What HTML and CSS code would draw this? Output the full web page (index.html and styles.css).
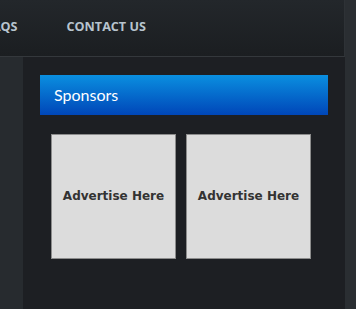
FILE: index.html
```html
<!DOCTYPE html>
<html>
  <head>
    <title>Sponsors</title>
    <link rel="stylesheet" href="styles.css">
  </head>

  <body>
    <div class="wrapper">
      <div class="nav">
        <ul class="menu">
          <li class="menu-item">FAQS</li>
          <li class="menu-item">CONTACT US</li>
        </ul>
      </div>

      <div class="main">
        <div class="sidebar"></div>
        <div class="content">
          <div class="widget-title">Sponsors</div>
          <div class="ads">
            <div class="ad">Advertise Here</div>
            <div class="ad">Advertise Here</div>
          </div>
        </div>
      </div>
    </div>
  </body>
</html>
```

FILE: styles.css
```css
html {
  height: 100%;
}

body {
  margin: 0;
  height: 100%;
  background: #2a2e32;
}

.wrapper {
  width: 345px;
  height: 100%;
  display: flex;
  flex-direction: column;
}

.nav {
  height: 57px;
  flex-shrink: 0;
  display: flex;
  align-items: center;
  padding-bottom: 4px;
  box-sizing: border-box;
  background: linear-gradient(#23272b, #1b1e21);
  border-bottom: 1px solid #34383c;
  border-right: 1px solid #2e3236;
  overflow: hidden;
}

.menu {
  display: flex;
  gap: 49px;
  margin: 0 0 0 -15px;
  padding: 0;
  list-style: none;
}

.menu-item {
  color: #b8c4ce;
  font-family: "Open Sans", sans-serif;
  font-weight: 700;
  font-size: 12.6px;
  white-space: nowrap;
}

.main {
  flex: 1;
  display: flex;
}

.sidebar {
  width: 23px;
  background: #272b2f;
}

.content {
  flex: 1;
  padding: 18px 17px 0 17px;
  background: #1d1f23;
}

.widget-title {
  height: 40px;
  display: flex;
  align-items: center;
  padding-left: 14px;
  padding-bottom: 1px;
  box-sizing: border-box;
  background: linear-gradient(#0a8fe0, #0046b8);
  color: #ffffff;
  font-family: "Lato", sans-serif;
  font-size: 16px;
}

.ads {
  display: flex;
  gap: 10px;
  margin-top: 19px;
  padding-left: 11px;
}

.ad {
  width: 125px;
  height: 125px;
  box-sizing: border-box;
  display: flex;
  align-items: center;
  justify-content: center;
  padding-bottom: 2px;
  background: #dcdcdc;
  border: 1px solid #8c8c8c;
  color: #333333;
  font-family: "DejaVu Sans", sans-serif;
  font-weight: 700;
  font-size: 12px;
}
```
